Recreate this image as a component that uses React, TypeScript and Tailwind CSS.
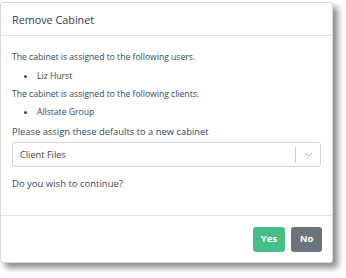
import React from "react";

export default function App() {
  return (
    <div className="w-[346px] h-[278px] bg-white relative" style={{ fontFamily: '"Open Sans", "Noto Sans", sans-serif' }}>
      <div className="absolute left-0 top-[2px] w-[333px] h-[261px] bg-white border border-[#d6d9dd] rounded-[3px] shadow-[5px_5px_6px_rgba(0,0,0,0.45)] flex flex-col">
        <div className="h-[33px] border-b border-[#dee2e6] flex items-center px-[11px] pt-[2px] text-[10.8px] text-[#2f3d4f]">
          Remove Cabinet
        </div>
        <div className="flex-1 px-[11px] pt-[12px] text-[8.6px] text-[#34495e]">
          <div className="h-[18px] leading-[18px]">The cabinet is assigned to the following users.</div>
          <div className="h-[19px] leading-[19px] flex items-center pl-[12px] pt-[1px]">
            <span className="w-[3px] h-[3px] rounded-full bg-[#34495e] mr-[10px]"></span>
            <span>Liz Hurst</span>
          </div>
          <div className="h-[18px] leading-[18px]">The cabinet is assigned to the following clients.</div>
          <div className="h-[19px] leading-[19px] flex items-center pl-[12px]">
            <span className="w-[3px] h-[3px] rounded-full bg-[#34495e] mr-[10px]"></span>
            <span>Allstate Group</span>
          </div>
          <div className="h-[19px] leading-[19px] text-[9.4px]">Please assign these defaults to a new cabinet</div>
          <div className="mt-[1px] h-[25px] border border-[#cfd4da] rounded-[3px] flex items-center">
            <div className="flex-1 pl-[7px] text-[9.2px] text-[#3a4556]">Client Files</div>
            <div className="w-px h-[16px] bg-[#cccccc]"></div>
            <div className="w-[24px] flex items-center justify-center">
              <svg width="9" height="6" viewBox="0 0 9 6" fill="none">
                <path d="M1 1l3.5 3.5L8 1" stroke="#b3b3b3" strokeWidth="1" />
              </svg>
            </div>
          </div>
          <div className="mt-[7px] h-[19px] leading-[19px] text-[9.5px]">Do you wish to continue?</div>
        </div>
        <div className="h-[47px] border-t border-[#dee2e6] flex items-center justify-end gap-[6px] pr-[10px]">
          <button className="w-[32px] h-[25px] rounded-[3px] bg-[#47bd87] text-white text-[9.5px] font-bold">Yes</button>
          <button className="w-[31px] h-[25px] rounded-[3px] bg-[#6c737d] text-white text-[9.5px] font-bold">No</button>
        </div>
      </div>
    </div>
  );
}
